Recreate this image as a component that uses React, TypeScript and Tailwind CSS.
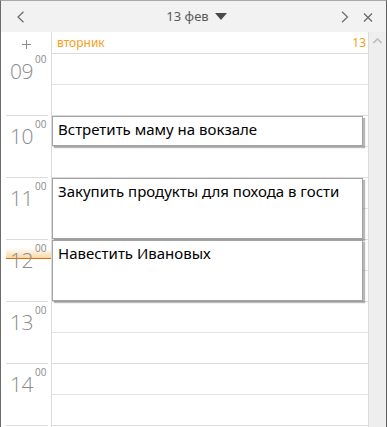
import React from "react";

const hours = ["09", "10", "11", "12", "13", "14", "15"];

function HourLabel({ h, shift }: { h: string; shift: number }) {
  return (
    <div className="relative h-[62px] shrink-0 ml-[5px] mr-[3px] border-b border-[#dcdcdc]">
      {h === "12" && (
        <div className="absolute left-0 right-[-3px] top-[8px] h-[10px] bg-gradient-to-b from-[rgba(250,215,160,0)] to-[#f9d6a3]" />
      )}
      {h !== "15" && (
        <div
          className="absolute left-[4px] flex items-start text-[#8a8a8a]"
          style={{ top: 10 - shift }}
        >
          <span className="text-[21px] leading-[21px] font-light tracking-[-0.5px]" style={{ fontFamily: '"Open Sans", sans-serif' }}>{h}</span>
          <span className="text-[10px] leading-[10px] ml-[2px] mt-[-7px]" style={{ fontFamily: '"Open Sans", sans-serif' }}>00</span>
        </div>
      )}
      {h === "12" && (
        <div className="absolute left-0 right-[-3px] top-[18px] h-px bg-[#d4711e]" />
      )}
    </div>
  );
}

function Event({ top, height, text }: { top: number; height: number; text: string }) {
  return (
    <div
      className="absolute left-0 w-[311px] bg-white border border-[#a3a3a3] shadow-[2px_2px_1px_rgba(0,0,0,0.28)] px-[5px] pt-[2px] text-[15px] leading-[20px] text-black"
      style={{ top, height, fontFamily: '"Noto Sans", sans-serif' }}
    >
      {text}
    </div>
  );
}

export default function App() {
  return (
    <div
      className="w-[387px] h-[427px] overflow-hidden bg-white border-l border-r border-t border-l-[#6b6b6b] border-r-[#5e5e5e] border-t-[#a8a8a8] flex flex-col"
      style={{ fontFamily: '"Noto Sans", sans-serif' }}
    >
      {/* header */}
      <div className="h-[31px] shrink-0 bg-[#f2f2f2] flex items-center relative">
        <svg className="absolute left-[15px] top-[10px]" width="10" height="12" viewBox="0 0 10 12">
          <path d="M7.5 0.8 L2 6 L7.5 11.2" fill="none" stroke="#6a6a6a" strokeWidth="1.2" />
        </svg>
        <div className="flex-1 flex justify-center items-center gap-[6px] pl-[6px]">
          <span className="text-[13px] text-[#5a5a5a] leading-none">13 фев</span>
          <svg width="12" height="7" viewBox="0 0 12 7">
            <path d="M0 0 L12 0 L6 7 Z" fill="#4a4a4a" />
          </svg>
        </div>
        <svg className="absolute left-[339px] top-[10px]" width="10" height="12" viewBox="0 0 10 12">
          <path d="M2 0.8 L7.5 6 L2 11.2" fill="none" stroke="#6a6a6a" strokeWidth="1.2" />
        </svg>
        <svg className="absolute left-[362px] top-[12px]" width="10" height="9" viewBox="0 0 10 9">
          <path d="M1 0.5 L9 8.5 M9 0.5 L1 8.5" fill="none" stroke="#6a6a6a" strokeWidth="1.3" />
        </svg>
      </div>
      {/* body */}
      <div className="flex flex-1 min-h-0">
        {/* gutter */}
        <div className="w-[50px] shrink-0 flex flex-col">
          <div className="h-[22px] shrink-0 relative">
            <svg className="absolute left-[21px] top-[8px]" width="9" height="9" viewBox="0 0 9 9">
              <path d="M4.5 0 V9 M0 4.5 H9" stroke="#8a8a8a" strokeWidth="1" />
            </svg>
          </div>
          {hours.map((h, i) => (
            <HourLabel key={h} h={h} shift={i === 0 ? 3 : 0} />
          ))}
        </div>
        {/* main */}
        <div className="w-[318px] shrink-0 border-l border-r border-[#dcdcdc] flex flex-col relative">
          <div className="h-[22px] shrink-0 border-b border-[#dcdcdc] flex items-center justify-between pl-[5px] pr-[2px] text-[12px] text-[#f59e17] leading-none">
            <span>вторник</span>
            <span>13</span>
          </div>
          {hours.map((h) => (
            <div key={h} className="h-[62px] shrink-0 flex flex-col border-b border-[#dcdcdc]">
              <div className="h-[31px] shrink-0 border-b border-[#e3e3e3]" />
            </div>
          ))}
          <Event top={84} height={30} text="Встретить маму на вокзале" />
          <Event top={146} height={61} text="Закупить продукты для похода в гости" />
          <Event top={208} height={61} text="Навестить Ивановых" />
        </div>
        {/* scrollbar */}
        <div className="w-[17px] shrink-0 bg-[#eeeeee] relative">
          <svg className="absolute left-[4px] top-[6px]" width="9" height="6" viewBox="0 0 9 6">
            <path d="M0.5 5 L4.5 1 L8.5 5" fill="none" stroke="#bdbdbd" strokeWidth="1.6" />
          </svg>
        </div>
      </div>
    </div>
  );
}
